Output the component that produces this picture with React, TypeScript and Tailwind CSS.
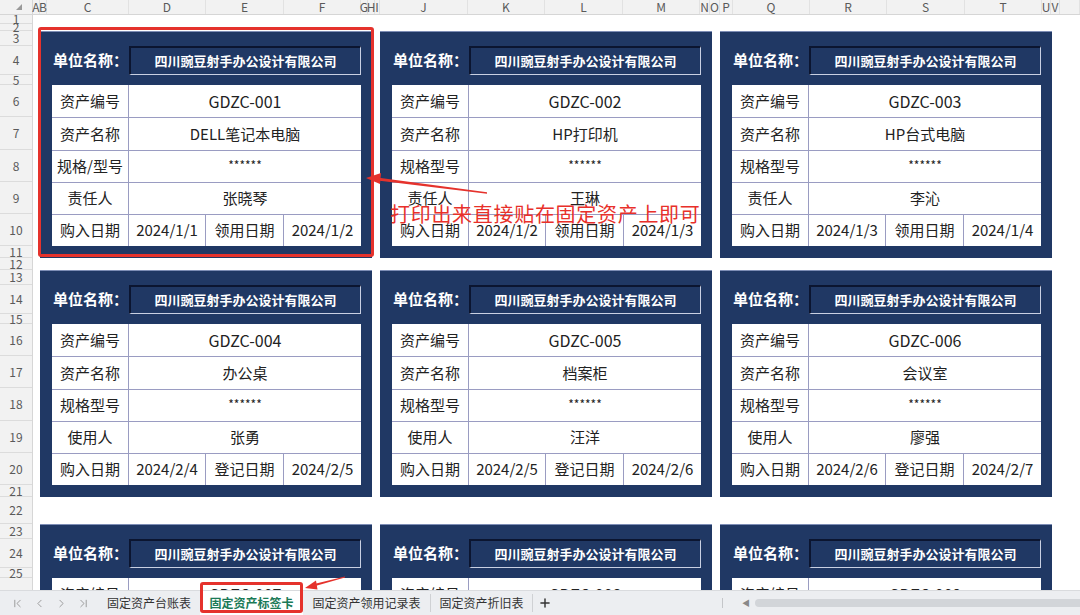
import { ChevronFirst, ChevronLeft, ChevronRight, ChevronLast, Plus } from "lucide-react"

type Asset = {
  code: string
  name: string
  specLabel: string
  personLabel: string
  person: string
  buyDate: string
  dateLabel: string
  date2: string
}

const assets: Asset[] = [
  { code: "GDZC-001", name: "DELL笔记本电脑", specLabel: "规格/型号", personLabel: "责任人", person: "张晓琴", buyDate: "2024/1/1", dateLabel: "领用日期", date2: "2024/1/2" },
  { code: "GDZC-002", name: "HP打印机", specLabel: "规格型号", personLabel: "责任人", person: "王琳", buyDate: "2024/1/2", dateLabel: "领用日期", date2: "2024/1/3" },
  { code: "GDZC-003", name: "HP台式电脑", specLabel: "规格型号", personLabel: "责任人", person: "李沁", buyDate: "2024/1/3", dateLabel: "领用日期", date2: "2024/1/4" },
  { code: "GDZC-004", name: "办公桌", specLabel: "规格型号", personLabel: "使用人", person: "张勇", buyDate: "2024/2/4", dateLabel: "登记日期", date2: "2024/2/5" },
  { code: "GDZC-005", name: "档案柜", specLabel: "规格型号", personLabel: "使用人", person: "汪洋", buyDate: "2024/2/5", dateLabel: "登记日期", date2: "2024/2/6" },
  { code: "GDZC-006", name: "会议室", specLabel: "规格型号", personLabel: "使用人", person: "廖强", buyDate: "2024/2/6", dateLabel: "登记日期", date2: "2024/2/7" },
  { code: "GDZC-007", name: "文件柜", specLabel: "规格型号", personLabel: "使用人", person: "", buyDate: "", dateLabel: "登记日期", date2: "" },
  { code: "GDZC-008", name: "投影仪", specLabel: "规格型号", personLabel: "使用人", person: "", buyDate: "", dateLabel: "登记日期", date2: "" },
  { code: "GDZC-009", name: "空调", specLabel: "规格型号", personLabel: "使用人", person: "", buyDate: "", dateLabel: "登记日期", date2: "" },
]

// column letters with their pixel widths
const columns: [string, number][] = [
  ["A", 7], ["B", 7], ["C", 82], ["D", 77], ["E", 78], ["F", 77], ["G", 7], ["H", 7], ["I", 5],
  ["J", 88], ["K", 77], ["L", 78], ["M", 77], ["N", 10], ["O", 10], ["P", 13],
  ["Q", 77], ["R", 77], ["S", 78], ["T", 77], ["U", 9], ["V", 9], ["", 20],
]

const rowHeights = [9, 7, 15, 29, 10, 32, 33, 32, 32, 32, 12, 12, 15, 29, 10, 32, 32, 33, 32, 32, 12, 27, 15, 29, 10, 32]

function Card({ d }: { d: Asset }) {
  const line = "border-[#9a9cc2]"
  return (
    <div className="w-[332px] h-[227px] shrink-0 bg-[#203864] border-t border-[#7d8db5] pt-[14px] pl-[12px] pr-[11px]">
      <div className="flex h-[29px]">
        <div className="w-[77px] flex items-center justify-center text-white font-bold text-[15px]">单位名称：</div>
        <div className="flex-1 flex items-center justify-center border-t-2 border-l-2 border-r border-b border-t-[#0b1530] border-l-[#0b1530] border-r-[#c9d0e2] border-b-[#c9d0e2] text-white font-bold text-[13px]">
          四川豌豆射手办公设计有限公司
        </div>
      </div>
      <div className="mt-[10px] h-[161px] bg-white flex flex-col text-[#222] text-[15px]">
        <div className="flex h-[32px]">
          <div className={`w-[77px] flex items-center justify-center border-r ${line}`}>资产编号</div>
          <div className="flex-1 flex items-center justify-center text-[16px]">{d.code}</div>
        </div>
        <div className={`flex h-[33px] border-t ${line}`}>
          <div className={`w-[77px] flex items-center justify-center border-r ${line}`}>资产名称</div>
          <div className="flex-1 flex items-center justify-center">{d.name}</div>
        </div>
        <div className={`flex h-[32px] border-t ${line}`}>
          <div className={`w-[77px] flex items-center justify-center border-r ${line}`}>{d.specLabel}</div>
          <div className="flex-1 flex items-start justify-center pt-[5px] text-[12px]">******</div>
        </div>
        <div className={`flex h-[32px] border-t ${line}`}>
          <div className={`w-[77px] flex items-center justify-center border-r ${line}`}>{d.personLabel}</div>
          <div className="flex-1 flex items-center justify-center">{d.person}</div>
        </div>
        <div className={`flex h-[32px] border-t ${line}`}>
          <div className={`w-[77px] flex items-center justify-center border-r ${line}`}>购入日期</div>
          <div className={`w-[77px] flex items-center justify-center border-r ${line}`}>{d.buyDate}</div>
          <div className={`w-[78px] flex items-center justify-center border-r ${line}`}>{d.dateLabel}</div>
          <div className="flex-1 flex items-center justify-center">{d.date2}</div>
        </div>
      </div>
    </div>
  )
}

export default function App() {
  return (
    <div className="relative w-[1080px] h-[615px] overflow-hidden bg-white font-['Noto_Sans_CJK_SC',sans-serif]">
      {/* column header */}
      <div className="flex h-[15px] bg-[#f2f2f2] border-b border-[#d6d6d6] text-[12px] leading-[14px] text-[#5a5a5a]">
        <div className="w-[33px] shrink-0 flex items-center justify-end pr-[10px] border-r border-[#d6d6d6]">
          <svg width="6" height="6" viewBox="0 0 6 6"><polygon points="6,0 6,6 0,6" fill="#9a9a9a" /></svg>
        </div>
        {columns.map(([c, w], i) => (
          <div key={i} style={{ width: w }} className="shrink-0 flex justify-center border-r border-[#e2e2e2]">
            {c}
          </div>
        ))}
      </div>

      {/* sheet body */}
      <div className="flex h-[575px] overflow-hidden">
        <div className="w-[33px] shrink-0 bg-[#f2f2f2] border-r border-[#d6d6d6] text-[12px] leading-none text-[#5a5a5a]">
          {rowHeights.map((h, i) => (
            <div key={i} style={{ height: h }} className="flex items-center justify-center border-b border-[#dcdcdc]">
              {i + 1}
            </div>
          ))}
        </div>
        <div className="flex-1 pt-[16px] pl-[7px]">
          <div className="flex gap-x-[8px]">
            {assets.slice(0, 3).map((a) => <Card key={a.code} d={a} />)}
          </div>
          <div className="flex gap-x-[8px] mt-[12px]">
            {assets.slice(3, 6).map((a) => <Card key={a.code} d={a} />)}
          </div>
          <div className="flex gap-x-[8px] mt-[27px]">
            {assets.slice(6, 9).map((a) => <Card key={a.code} d={a} />)}
          </div>
        </div>
      </div>

      {/* sheet tabs */}
      <div className="flex items-center h-[25px] bg-[#eceef1] border-t border-[#d9dbde] text-[12px] text-[#333]">
        <div className="flex items-center gap-[9px] pl-[11px] w-[98px] text-[#8a8a8a]">
          <ChevronFirst size={13} strokeWidth={1.5} />
          <ChevronLeft size={13} strokeWidth={1.5} />
          <ChevronRight size={13} strokeWidth={1.5} />
          <ChevronLast size={13} strokeWidth={1.5} />
        </div>
        <div className="w-[102px] text-center">固定资产台账表</div>
        <div className="w-[103px] h-full flex items-center justify-center bg-white font-bold text-[#1b7a57]">固定资产标签卡</div>
        <div className="w-[128px] text-center border-r border-[#cfd1d4]">固定资产领用记录表</div>
        <div className="w-[102px] text-center border-r border-[#cfd1d4]">固定资产折旧表</div>
        <div className="w-[24px] flex justify-center text-[#333]">
          <Plus size={14} strokeWidth={2.5} />
        </div>
        <div className="w-[165px]" />
        <div className="h-[10px] border-l border-[#c4c6c9]" />
        <div className="ml-[19px] text-[8px] text-[#888]">◀</div>
        <div className="ml-[5px] flex-1 h-[8px] rounded-l-full bg-[#d2d5d9]" />
      </div>

      {/* annotations */}
      <div className="absolute left-[38px] top-[27px] w-[336px] h-[230px] border-[3px] border-[#e5322c] rounded-[3px] pointer-events-none" />
      <div className="absolute left-[200px] top-[582px] w-[103px] h-[31px] border-[3px] border-[#e5322c] rounded-[3px] pointer-events-none" />
      <div className="absolute left-[390px] top-[201px] text-[20px] tracking-[0.7px] leading-[26px] text-[#e8302a] whitespace-nowrap">
        打印出来直接贴在固定资产上即可
      </div>
      <svg className="absolute inset-0 pointer-events-none" width="1080" height="615">
        <polygon points="487,192.2 377,177.6 377.6,180.6 487,193.8" fill="#e5322c" />
        <polygon points="366,178 381,173 380,184" fill="#e5322c" />
        <polygon points="345,576.4 313,584.2 313.6,586.4 345,577.6" fill="#e5322c" />
        <polygon points="305,588 316,580.5 317.5,589.5" fill="#e5322c" />
      </svg>
    </div>
  )
}
